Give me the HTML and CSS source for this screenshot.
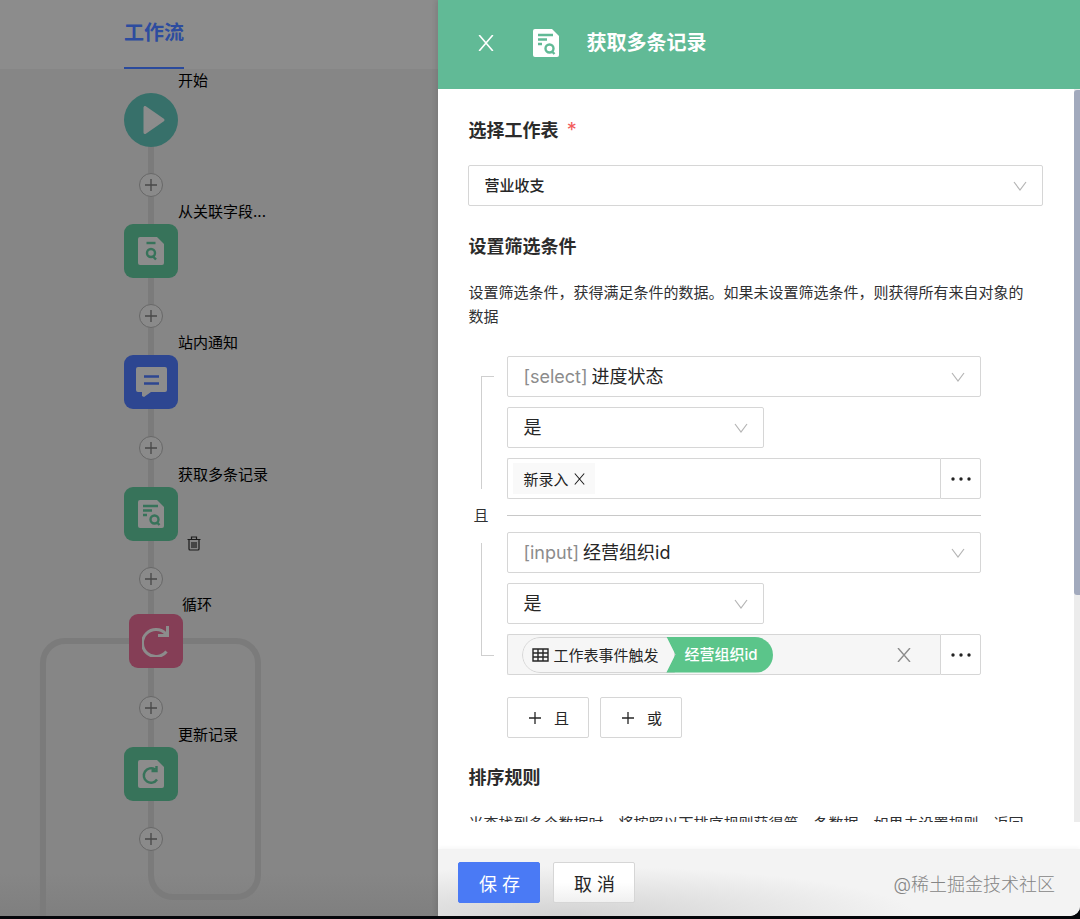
FILE: index.html
```html
<!DOCTYPE html>
<html lang="zh-CN">
<head>
    <meta charset="UTF-8">
    <meta name="viewport" content="width=device-width, initial-scale=1.0">
    <title>工作流</title>
    <link rel="stylesheet" href="styles.css">
</head>
<body>
    <!-- Shared icons -->
    <svg class="sprite" aria-hidden="true">
        <symbol id="icon-plus" viewBox="0 0 14 14"><path d="M7 1v12M1 7h12" fill="none" stroke="currentColor" stroke-width="1.300"/></symbol>
        <symbol id="icon-close" viewBox="0 0 14 14"><path d="M1 0l12 14M13 0L1 14" fill="none" stroke="currentColor" stroke-width="1.400"/></symbol>
        <symbol id="icon-down" viewBox="0 0 14 10"><path d="M1 1l6 8 6-8" fill="none" stroke="currentColor" stroke-width="1.200"/></symbol>
        <symbol id="icon-more" viewBox="0 0 20 4"><circle cx="2" cy="2" r="1.7"/><circle cx="10" cy="2" r="1.7"/><circle cx="18" cy="2" r="1.7"/></symbol>
        <symbol id="icon-records" viewBox="0 0 26 28">
            <path class="sheet" d="M2 0h17l7 7v19a2 2 0 0 1-2 2H2a2 2 0 0 1-2-2V2a2 2 0 0 1 2-2z"/>
            <g class="ink"><path d="M5 6h15M5 10.500h9M5 15h4"/><circle cx="16.500" cy="19.500" r="4"/><path d="M19 22.500l2.500 2.500"/></g>
        </symbol>
        <symbol id="icon-record" viewBox="0 0 26 28">
            <path class="sheet" d="M2 0h17l7 7v19a2 2 0 0 1-2 2H2a2 2 0 0 1-2-2V2a2 2 0 0 1 2-2z"/>
            <g class="ink"><path d="M8.500 6h9"/><circle cx="13" cy="16" r="4"/><path d="M15 19.500l3 3"/></g>
        </symbol>
        <symbol id="icon-update" viewBox="0 0 26 28">
            <path class="sheet" d="M2 0h17l7 7v19a2 2 0 0 1-2 2H2a2 2 0 0 1-2-2V2a2 2 0 0 1 2-2z"/>
            <path class="ink" d="M19 19.500A7.200 7.200 0 1 1 17 9.500M18.500 6v5h-5"/>
        </symbol>
    </svg>

    <div class="app">
        <main class="workspace">
            <nav class="tabs">
                <a class="tab" href="#flow">工作流</a>
            </nav>
            <div class="canvas" id="flow">
                <svg class="wires" width="300" height="848" aria-hidden="true">
                    <path d="M151 51V807a22 22 0 0 0 22 22h63a22 22 0 0 0 22-22V595a22 22 0 0 0-22-22H65a22 22 0 0 0-22 22V848"/>
                </svg>

                <div class="node node-start">
                    <svg width="22" height="28" viewBox="0 0 22 28"><path d="M2 1.500v25L20 14z" fill="currentColor" stroke="currentColor" stroke-width="3" stroke-linejoin="round"/></svg>
                </div>
                <div class="node node-related"><svg width="26" height="28"><use href="#icon-record"/></svg></div>
                <div class="node node-notice">
                    <svg width="31" height="30" viewBox="0 0 31 30">
                        <path d="M2 0h27a2 2 0 0 1 2 2v21a2 2 0 0 1-2 2H15l-7 5-2-1v-4H2a2 2 0 0 1-2-2V2a2 2 0 0 1 2-2z" fill="currentColor"/>
                        <path class="ink" d="M8 9.500h15M8 16.500h15"/>
                    </svg>
                </div>
                <div class="node node-records"><svg width="26" height="28"><use href="#icon-records"/></svg></div>
                <div class="node node-loop">
                    <svg width="28" height="32" viewBox="0 0 28 32"><path d="M24.500 26.500A13.500 13.500 0 1 1 24 9M25.500 1v9.500H16" fill="none" stroke="currentColor" stroke-width="3"/></svg>
                </div>
                <div class="node node-update"><svg width="26" height="28"><use href="#icon-update"/></svg></div>

                <span class="node-label label-start">开始</span>
                <span class="node-label label-related">从关联字段...</span>
                <span class="node-label label-notice">站内通知</span>
                <span class="node-label label-records">获取多条记录</span>
                <span class="node-label label-loop">循环</span>
                <span class="node-label label-update">更新记录</span>

                <button class="add add-1" aria-label="添加节点"><svg width="14" height="14"><use href="#icon-plus"/></svg></button>
                <button class="add add-2" aria-label="添加节点"><svg width="14" height="14"><use href="#icon-plus"/></svg></button>
                <button class="add add-3" aria-label="添加节点"><svg width="14" height="14"><use href="#icon-plus"/></svg></button>
                <button class="add add-4" aria-label="添加节点"><svg width="14" height="14"><use href="#icon-plus"/></svg></button>
                <button class="add add-5" aria-label="添加节点"><svg width="14" height="14"><use href="#icon-plus"/></svg></button>
                <button class="add add-6" aria-label="添加节点"><svg width="14" height="14"><use href="#icon-plus"/></svg></button>

                <button class="remove" aria-label="删除节点">
                    <svg width="14" height="15" viewBox="0 0 14 15"><path d="M.500 3.500h13M4.500 3V1h5v2M2 3.500v9.500a1 1 0 0 0 1 1h8a1 1 0 0 0 1-1V3.500M5 6v6M7 6v6M9 6v6" fill="none" stroke="currentColor" stroke-width="1.200"/></svg>
                </button>
            </div>
        </main>

        <aside class="drawer">
            <header class="drawer-header">
                <button class="drawer-close" aria-label="关闭"><svg width="16" height="16"><use href="#icon-close"/></svg></button>
                <svg class="drawer-icon" width="26" height="28"><use href="#icon-records"/></svg>
                <h1 class="drawer-title">获取多条记录</h1>
            </header>

            <div class="drawer-scroll">
                <form class="drawer-body">
                    <label class="section-title" for="sheet">选择工作表 <span class="required">*</span></label>
                    <div class="select-box select-sheet">
                        <select id="sheet"><option>营业收支</option></select>
                        <svg width="14" height="10"><use href="#icon-down"/></svg>
                    </div>

                    <h2 class="section-title">设置筛选条件</h2>
                    <p class="hint">设置筛选条件，获得满足条件的数据。如果未设置筛选条件，则获得所有来自对象的<br>数据</p>

                    <div class="conditions">
                        <div class="relation">
                            <span class="bracket bracket-top"></span>
                            <span class="relation-text">且</span>
                            <span class="bracket bracket-bottom"></span>
                        </div>
                        <div class="rules">
                            <div class="rule">
                                <label class="select-box">
                                    <span class="field-type">[select]</span>
                                    <select><option>进度状态</option></select>
                                    <svg width="14" height="10"><use href="#icon-down"/></svg>
                                </label>
                                <div class="select-box select-short">
                                    <select aria-label="条件"><option>是</option></select>
                                    <svg width="14" height="10"><use href="#icon-down"/></svg>
                                </div>
                                <div class="value-row">
                                    <div class="value-box">
                                        <span class="tag">新录入<button type="button" aria-label="移除"><svg width="11" height="12"><use href="#icon-close"/></svg></button></span>
                                        <input type="text" aria-label="值">
                                    </div>
                                    <button class="more" type="button" aria-label="更多"><svg width="20" height="4"><use href="#icon-more"/></svg></button>
                                </div>
                            </div>
                            <hr class="divider">
                            <div class="rule">
                                <label class="select-box">
                                    <span class="field-type">[input]</span>
                                    <select><option>经营组织id</option></select>
                                    <svg width="14" height="10"><use href="#icon-down"/></svg>
                                </label>
                                <div class="select-box select-short">
                                    <select aria-label="条件"><option>是</option></select>
                                    <svg width="14" height="10"><use href="#icon-down"/></svg>
                                </div>
                                <div class="value-row">
                                    <div class="value-box value-linked">
                                        <span class="pill">
                                            <span class="pill-source">
                                                <svg width="17" height="14" viewBox="0 0 17 14"><path d="M1 1h15v12H1zM1 5h15M1 9h15M6 1v12M11 1v12" fill="none" stroke="currentColor" stroke-width="1.400"/></svg>
                                                工作表事件触发
                                            </span>
                                            <span class="pill-field">经营组织id</span>
                                        </span>
                                        <button class="clear" type="button" aria-label="清除"><svg width="14" height="14"><use href="#icon-close"/></svg></button>
                                    </div>
                                    <button class="more" type="button" aria-label="更多"><svg width="20" height="4"><use href="#icon-more"/></svg></button>
                                </div>
                            </div>
                            <div class="rule-actions">
                                <button class="button" type="button"><svg width="14" height="14"><use href="#icon-plus"/></svg>且</button>
                                <button class="button" type="button"><svg width="14" height="14"><use href="#icon-plus"/></svg>或</button>
                            </div>
                        </div>
                    </div>

                    <h2 class="section-title">排序规则</h2>
                    <p class="hint">当查找到多个数据时，将按照以下排序规则获得第一条数据。如果未设置规则，返回</p>
                </form>
                <div class="scrollbar"><div class="scrollbar-thumb"></div></div>
            </div>

            <footer class="drawer-footer">
                <button class="button button-primary" type="button">保 存</button>
                <button class="button button-cancel" type="button">取 消</button>
                <span class="watermark">@稀土掘金技术社区</span>
            </footer>
        </aside>
    </div>
</body>
</html>
```
FILE: styles.css
```css
* {
    box-sizing: border-box;
}

body {
    margin: 0;
    background: #05060a;
    color: #303133;
    font-family: Inter, 'Noto Sans CJK SC', sans-serif;
    font-size: 15px;
}

button,
input,
select {
    margin: 0;
    padding: 0;
    border: none;
    background: none;
    color: inherit;
    font: inherit;
}

button {
    cursor: pointer;
}

svg {
    display: block;
    flex: none;
}

.sprite {
    position: absolute;
    width: 0;
    height: 0;
}

.app {
    display: grid;
    grid-template-columns: 41fr 60fr;
    height: 100vh;
    padding-bottom: 3px;
}

/* Workspace, dimmed behind the drawer */
.workspace {
    display: flex;
    flex-direction: column;
    min-width: 0;
    overflow: hidden;
    background: #868686;
}

.tabs {
    display: flex;
    flex: none;
    height: 69px;
    padding-left: 124px;
    background: #8c8c8c;
}

.tab {
    padding-top: 18px;
    border-bottom: 2px solid #2a4a9c;
    color: #2d4c9f;
    font-size: 20px;
    font-weight: 700;
    line-height: 30px;
    text-decoration: none;
}

.canvas {
    position: relative;
    flex: 1;
    margin-top: -1px;
    background: linear-gradient(transparent 95%, #7f7f7f);
    overflow: hidden;
}

.wires {
    position: absolute;
    top: 0;
    left: 0;
    fill: none;
    stroke: #7b7b7b;
    stroke-width: 6px;
}

.node {
    position: absolute;
    left: 124px;
    display: flex;
    align-items: center;
    justify-content: center;
    width: 54px;
    height: 54px;
    border-radius: 9px;
    background: #37735a;
    color: #8c8c8c;
}

.node .ink,
.node use {
    color: #37735a;
}

.sheet {
    fill: var(--sheet, #8c8c8c);
}

.ink {
    fill: none;
    stroke: currentColor;
    stroke-width: 2.4px;
}

.node-start { top: 25px; padding-left: 6px; border-radius: 50%; background: #37706a; }
.node-related { top: 156px; }
.node-notice { top: 287px; background: #2d4691; }
.node-notice .ink { color: #2d4691; }
.node-records { top: 419px; }
.node-loop { top: 546px; left: 129px; background: #853e56; }
.node-update { top: 679px; }

.node-label {
    position: absolute;
    left: 178px;
    color: #000;
    line-height: 20px;
    white-space: nowrap;
}

.label-start { top: 3px; }
.label-related { top: 134px; }
.label-notice { top: 265px; }
.label-records { top: 397px; }
.label-loop { top: 527px; left: 182px; }
.label-update { top: 657px; }

.add {
    position: absolute;
    left: 139px;
    display: flex;
    align-items: center;
    justify-content: center;
    width: 24px;
    height: 24px;
    border: 1px solid #686868;
    border-radius: 50%;
    background: #8a8a8a;
    color: #484848;
}

.add-1 { top: 105px; }
.add-2 { top: 236px; }
.add-3 { top: 368px; }
.add-4 { top: 499px; }
.add-5 { top: 628px; }
.add-6 { top: 759px; }

.remove {
    position: absolute;
    top: 468px;
    left: 187px;
    color: #1c1c1c;
}

/* Drawer */
.drawer {
    display: flex;
    flex-direction: column;
    min-width: 0;
    min-height: 0;
    border-bottom-right-radius: 10px;
    background: #fff;
    box-shadow: -2px 0 5px rgba(0, 0, 0, 0.1);
    overflow: hidden;
    z-index: 1;
}

.drawer-header {
    display: flex;
    flex: none;
    align-items: center;
    height: 89px;
    padding: 0 40px 4px;
    background: #61ba96;
    color: #61ba96;
    --sheet: #fff;
}

.drawer-close {
    color: #fff;
}

.drawer-icon {
    margin: 0 27px 0 39px;
}

.drawer-title {
    margin: 0;
    color: #fff;
    font-size: 20px;
    font-weight: 700;
    line-height: 30px;
}

.drawer-scroll {
    display: flex;
    flex: 1;
    min-height: 0;
    overflow: hidden;
}

.drawer-body {
    flex: 1;
    min-width: 0;
    padding: 28px 31px 0 30px;
}

.scrollbar {
    width: 6px;
    padding-top: 1px;
    background: #ececec;
}

.scrollbar-thumb {
    height: 69%;
    border-radius: 3px 0 0 3px;
    background: #a2aabd;
}

.section-title {
    display: block;
    margin: 0 0 21px;
    color: #2b2b2b;
    font-size: 18px;
    font-weight: 700;
    line-height: 27px;
}

.required {
    margin-left: 4px;
    color: #f25c5c;
    font-size: 20px;
    font-weight: 400;
}

.hint {
    margin: 0 0 27px;
    line-height: 24px;
    white-space: nowrap;
}

.select-box {
    display: flex;
    align-items: center;
    height: 41px;
    padding: 0 15px;
    border: 1px solid #d6d6d6;
    border-radius: 2px;
    color: #262626;
    font-size: 18px;
}

.select-box select {
    flex: 1;
    min-width: 0;
    appearance: none;
    outline: none;
}

.select-box svg {
    color: #b5b5b5;
}

.select-sheet {
    margin-bottom: 27px;
    font-size: 15px;
    font-weight: 500;
}

.select-short {
    width: 257px;
}

.field-type {
    margin-right: 4px;
    color: #8c8c8c;
}

.conditions {
    display: grid;
    grid-template-columns: 39px 1fr;
    margin: 0 62px 26px 0;
}

/* The bracket spans both rules, not the buttons below them */
.relation {
    display: flex;
    flex-direction: column;
    padding: 20px 13px 82px;
}

.bracket {
    flex: 1;
    width: 13px;
    border-left: 1px solid #cfcfcf;
}

.bracket-top {
    border-top: 1px solid #cfcfcf;
}

.bracket-bottom {
    border-bottom: 1px solid #cfcfcf;
}

.relation-text {
    align-self: center;
    margin: 0 14px 0 0;
    line-height: 54px;
}

.rules {
    min-width: 0;
}

.rule {
    display: flex;
    flex-direction: column;
    gap: 10px;
}

.divider {
    margin: 16px 0;
    border: none;
    border-top: 1px solid #c8c8c8;
}

.value-row {
    display: flex;
    height: 41px;
}

.value-box {
    display: flex;
    flex: 1;
    align-items: center;
    min-width: 0;
    padding: 0 5px;
    border: 1px solid #d6d6d6;
    border-right: none;
    border-radius: 2px 0 0 2px;
}

.value-box input {
    flex: 1;
    min-width: 0;
    outline: none;
}

.value-linked {
    justify-content: space-between;
    padding: 0 29px 0 14px;
    background: #f6f6f6;
}

.more {
    display: flex;
    align-items: center;
    justify-content: center;
    width: 41px;
    border: 1px solid #d6d6d6;
    border-radius: 0 2px 2px 0;
    fill: #222;
}

.tag {
    display: flex;
    align-items: center;
    gap: 6px;
    height: 31px;
    padding: 0 10px;
    background: #f9f9f9;
    color: #1f1f1f;
}

.pill {
    display: flex;
    height: 36px;
    border-radius: 18px;
    overflow: hidden;
    white-space: nowrap;
}

.pill-source {
    display: flex;
    align-items: center;
    gap: 4px;
    padding: 0 16px 0 9px;
    border: 1px solid #d6d6d6;
    border-radius: 18px 0 0 18px;
    color: #262626;
}

.pill-field {
    margin-left: -9px;
    padding: 0 16px 0 18px;
    background: #5bc58a;
    clip-path: polygon(0 0, 100% 0, 100% 100%, 0 100%, 9px 50%);
    color: #fff;
    font-weight: 500;
    line-height: 36px;
}

.clear {
    color: #8c8c8c;
}

.button {
    display: flex;
    align-items: center;
    justify-content: center;
    gap: 12px;
    min-width: 82px;
    height: 41px;
    border: 1px solid #d6d6d6;
    border-radius: 2px;
    background: #fff;
    color: #262626;
}

.rule-actions {
    display: flex;
    gap: 11px;
    margin-top: 22px;
}

.drawer-footer {
    display: flex;
    flex: none;
    align-items: center;
    gap: 13px;
    height: 67px;
    margin-top: 27px;
    padding: 0 25px 0 20px;
    background: radial-gradient(ellipse 350px 50px at 20% 100%, #d2d2d2, transparent), #f3f3f3;
    box-shadow: 0 -2px 4px rgba(0, 0, 0, 0.03);
}

.button-primary,
.button-cancel {
    font-size: 18px;
}

.button-primary {
    border-color: #4a7af5;
    background: #4a7af5;
    color: #fff;
}

.button-cancel {
    background: linear-gradient(#fff 50%, #f0f0f0);
}

.watermark {
    margin-left: auto;
    color: #858585;
    font-size: 18px;
    font-weight: 300;
    white-space: nowrap;
}
```
